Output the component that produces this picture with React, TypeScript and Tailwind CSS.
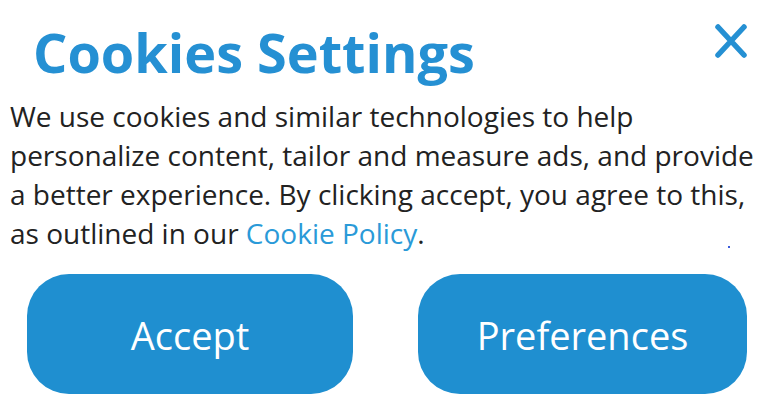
import React from "react";

export default function App() {
  return (
    <div className="relative w-[768px] h-[419px] bg-white overflow-hidden font-['Open_Sans',sans-serif]">
      <div className="flex items-start justify-between pl-[33px] pr-[20px] pt-[22px]">
        <h1 className="text-[54px] leading-[60px] font-bold text-[#2590d3]">
          Cookies Settings
        </h1>
        <button aria-label="Close" className="mt-[1px] w-[34px] h-[36px] flex items-center justify-center">
          <svg width="34" height="36" viewBox="0 0 34 36">
            <path d="M4 4 L30 32 M30 4 L4 32" stroke="#2590d3" strokeWidth="5.5" strokeLinecap="round" fill="none" />
          </svg>
        </button>
      </div>
      <p className="mt-[15px] pl-[10px] pr-[4px] text-[28px] leading-[39px] text-[#222222] whitespace-nowrap">
        We use cookies and similar technologies to help
        <br />
        personalize content, tailor and measure ads, and provide
        <br />
        a better experience. By clicking accept, you agree to this,
        <br />
        as outlined in our <a className="text-[#2a9ad8]">Cookie Policy</a>.
      </p>
      <div className="mt-[21px] flex pl-[27px] gap-[65px]">
        <button className="w-[326px] h-[120px] rounded-[42px] bg-[#1f8fd0] text-white text-[38px] font-normal pt-[3px]">
          Accept
        </button>
        <button className="w-[329px] h-[120px] rounded-[42px] bg-[#1f8fd0] text-white text-[38px] font-normal pt-[3px]">
          Preferences
        </button>
      </div>
      <span className="absolute left-[728px] top-[246px] w-[2px] h-[2px] bg-[#3b5bdb]" />
    </div>
  );
}
